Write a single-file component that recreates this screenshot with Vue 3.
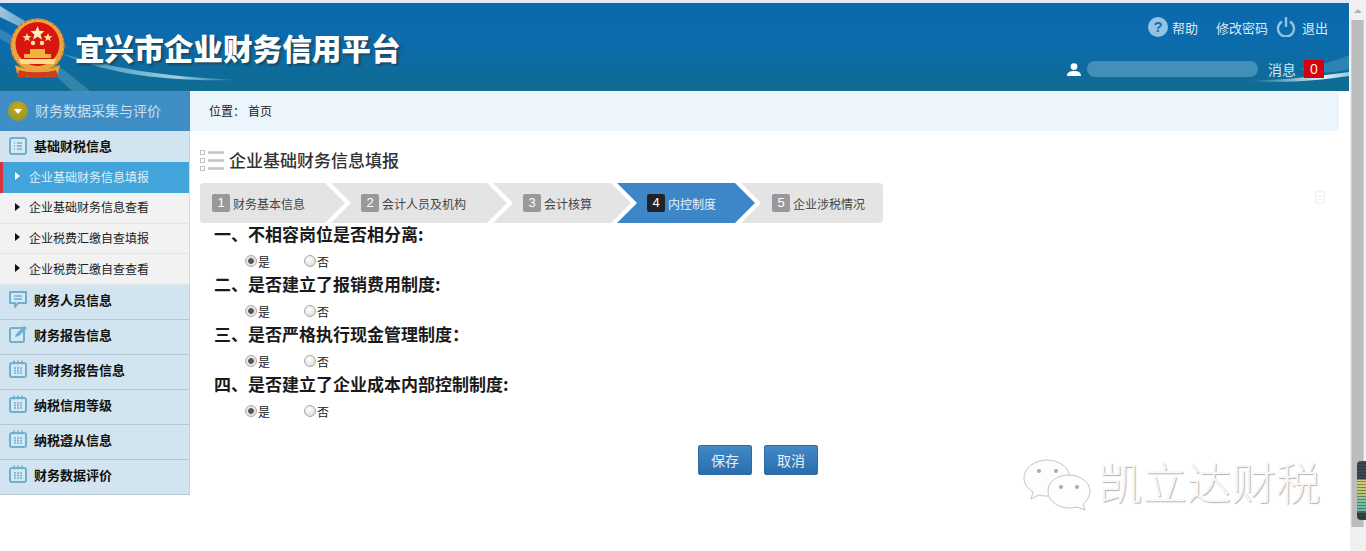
<template>
  <div class="page">
    <div class="viewport">
      <header class="top">
        <svg class="swoosh" viewBox="0 0 1349 88" preserveAspectRatio="none">
          <defs>
            <linearGradient id="sw1" x1="0" x2="1" y1="0" y2="0">
              <stop offset="0" stop-color="#fff" stop-opacity=".6" />
              <stop offset="1" stop-color="#fff" stop-opacity="0" />
            </linearGradient>
            <linearGradient id="sw2" x1="0" x2="1" y1="0" y2="0">
              <stop offset="0" stop-color="#9fe0f5" stop-opacity="0" />
              <stop offset=".75" stop-color="#e8fbff" stop-opacity=".95" />
              <stop offset="1" stop-color="#d5f2fa" stop-opacity=".7" />
            </linearGradient>
            <linearGradient id="sw3" x1="0" x2="1" y1="0" y2="0">
              <stop offset="0" stop-color="#7fd0ea" stop-opacity=".35" />
              <stop offset=".65" stop-color="#d0f1fa" stop-opacity=".75" />
              <stop offset="1" stop-color="#bdeaf6" stop-opacity="0" />
            </linearGradient>
          </defs>
          <path d="M0 3 C30 22 55 34 75 48 C45 36 20 24 0 14Z" fill="url(#sw1)" />
          <path d="M0 26 C25 40 60 62 90 88 L72 88 C50 66 25 48 0 36Z" fill="#8cc9e0" fill-opacity=".28" />
          <path d="M60 50 C110 64 160 74 240 77 C160 79 105 70 60 50Z" fill="url(#sw3)" />
          <path d="M1245 78 C1285 77 1320 73 1349 69 L1349 73 C1315 78 1285 80 1245 78Z" fill="url(#sw2)" />
          <path d="M1300 66 C1320 62 1335 58 1349 52 L1349 66 C1335 70 1320 71 1300 66Z" fill="#9fdcf0" fill-opacity=".22" />
        </svg>
        <svg class="emblem" viewBox="0 0 55 62">
          <circle cx="27.5" cy="27.5" r="27" fill="#e9a63e" />
          <circle cx="27.5" cy="27.5" r="26.5" fill="none" stroke="#cf6a22" stroke-width="1.2" stroke-dasharray="3 2" />
          <circle cx="27.5" cy="26" r="22" fill="#d9150f" />
          <polygon points="27.5,8 29.4,12.8 34.5,13.2 30.6,16.4 31.9,21.4 27.5,18.7 23.1,21.4 24.4,16.4 20.5,13.2 25.6,12.8" fill="#fff0c0" />
          <g fill="#fbe29a">
            <polygon points="17,15 18.2,18 21.4,18.2 18.9,20.2 19.7,23.3 17,21.6 14.3,23.3 15.1,20.2 12.6,18.2 15.8,18" />
            <polygon points="38,15 39.2,18 42.4,18.2 39.9,20.2 40.7,23.3 38,21.6 35.3,23.3 36.1,20.2 33.6,18.2 36.8,18" />
            <circle cx="23" cy="25" r="2.2" />
            <circle cx="32" cy="25" r="2.2" />
          </g>
          <path d="M20 31h15v5h6v4H14v-4h6z" fill="#eeb53c" />
          <path d="M9 41h37l-2 5H11z" fill="#fbe08a" />
          <path d="M5 47c5 2 9 4 13 4h19c4 0 8-2 13-4l-2 8c-5 6-36 6-41 0z" fill="#e9a63e" />
          <path d="M9 52c6 3 31 3 37 0l2 6c-3 3-7 2-10 0-4 3-17 3-21 0-3 2-7 3-10 0z" fill="#d23a1e" />
        </svg>
        <div class="brand">宜兴市企业财务信用平台</div>
        <div class="top-right">
          <div class="links">
            <a class="link">
              <svg class="ic-help" viewBox="0 0 20 20"><circle cx="10" cy="10" r="10" fill="#93c3e4" /><text x="10" y="15" text-anchor="middle" class="q">?</text></svg>
              帮助
            </a>
            <a class="link pw">修改密码</a>
            <a class="link">
              <svg class="ic-power" viewBox="0 0 20 20" fill="none" stroke="#93c3e4" stroke-width="2.4"><path d="M6 4.6a8 8 0 1 0 8 0" /><path d="M10 0v10" /></svg>
              退出
            </a>
          </div>
          <div class="user-row">
            <svg class="ic-user" viewBox="0 0 14 13"><circle cx="7" cy="3.6" r="3.4" fill="#fff" /><path d="M0 13c0-4 3-5 7-5s7 1 7 5z" fill="#fff" /></svg>
            <span class="blur"></span>
            <span class="msg">消息</span>
            <span class="badge">0</span>
          </div>
        </div>
      </header>

      <div class="body">
        <aside class="side">
          <div class="side-title">
            <span class="dot"></span>
            <span class="side-text">财务数据采集与评价</span>
          </div>
          <template v-for="g in groups" :key="g.name">
            <div class="group" :class="{ first: g.first }">
              <svg class="g-icon" viewBox="0 0 18 18">
                <template v-if="g.icon === 'list'">
                  <rect x="1" y="1" width="16" height="16" rx="2" fill="#d8e8f2" stroke="#6fb0d0" stroke-width="2" />
                  <path d="M5 6h1M8 6h5M5 9h1M8 9h5M5 12h1M8 12h5" stroke="#6fb0d0" stroke-width="1.4" />
                </template>
                <template v-else-if="g.icon === 'chat'">
                  <path d="M1 2h16v11H9l-3 4v-4H1z" fill="#d8e8f2" stroke="#6fb0d0" stroke-width="2" stroke-linejoin="round" />
                  <path d="M5 6h8M5 9h8" stroke="#6fb0d0" stroke-width="1.4" />
                </template>
                <template v-else-if="g.icon === 'edit'">
                  <rect x="1" y="3" width="14" height="14" rx="1.5" fill="#d8e8f2" stroke="#6fb0d0" stroke-width="2" />
                  <path d="M6 12l1-3 8-8 3 2-8 8z" fill="#6fb0d0" />
                </template>
                <template v-else>
                  <rect x="1" y="3" width="16" height="14" rx="2" fill="#d8e8f2" stroke="#6fb0d0" stroke-width="2" />
                  <path d="M5 0.5v4M9 0.5v4M13 0.5v4" stroke="#6fb0d0" stroke-width="1.5" />
                  <path d="M5 8h8M5 10.5h8M5 13h8" stroke="#6fb0d0" stroke-width="1.3" stroke-dasharray="2 1" />
                </template>
              </svg>
              <span class="g-text">{{ g.name }}</span>
            </div>
            <div
              v-for="s in g.items"
              :key="s.name"
              class="sub"
              :class="{ active: s.active }"
            >
              <i class="arrow"></i>{{ s.name }}
            </div>
          </template>
        </aside>

        <main class="main">
          <div class="crumb">位置：<span class="here">首页</span></div>

          <div class="panel">
            <h2 class="heading">
              <svg class="h-icon" viewBox="0 0 24 22" fill="none">
                <g stroke="#c3c3c3">
                  <rect x="0.5" y="0.5" width="4" height="4" />
                  <rect x="0.5" y="8.5" width="4" height="4" />
                  <rect x="0.5" y="16.5" width="4" height="4" />
                </g>
                <path d="M8 2.5h16M8 10.5h16M8 18.5h16" stroke="#c3c3c3" stroke-width="2.4" />
              </svg>
              <span class="h-text">企业基础财务信息填报</span>
            </h2>

            <div class="steps">
              <div
                v-for="(s, i) in steps"
                :key="s"
                class="step"
                :class="{ on: i === 3, head: i === 0, tail: i === 4 }"
                :style="{ width: stepWidths[i] + 'px' }"
              >
                <b class="num">{{ i + 1 }}</b>{{ s }}
              </div>
            </div>

            <div class="qs">
              <div v-for="(q, i) in questions" :key="q" class="q-block">
                <div class="q-title">{{ q }}</div>
                <div class="q-opts">
                  <label class="opt">
                    <input v-model="answers[i]" type="radio" :name="'q' + i" value="yes" />是
                  </label>
                  <label class="opt">
                    <input v-model="answers[i]" type="radio" :name="'q' + i" value="no" />否
                  </label>
                </div>
              </div>
            </div>

            <div class="actions">
              <button class="btn">保存</button>
              <button class="btn">取消</button>
            </div>
          </div>

          <svg class="ghost" viewBox="0 0 16 18" fill="none" stroke="#ececec">
            <path d="M1 3h14M3 3v13h10V3M6 1h4M5 8h6M5 12h6" />
          </svg>

          <div class="mark">
            <svg class="wechat" viewBox="0 0 70 56">
              <g fill="#fdfdfd" stroke="#c4c4c4" stroke-width="1">
                <path d="M24 2c12 0 23 8 23 18 0 10-10 18-23 18-3 0-5 0-8-1l-8 4 2-7C5 31 1 26 1 20 1 10 12 2 24 2z" />
                <path d="M46 17c11 0 21 7 21 16 0 5-3 10-7 13l2 6-8-3c-3 1-5 1-8 1-11 0-21-7-21-17s10-16 21-16z" />
              </g>
              <g fill="#ababab">
                <circle cx="16" cy="13" r="2" /><circle cx="33" cy="13" r="2" />
                <circle cx="38" cy="29" r="2" /><circle cx="54" cy="29" r="2" />
              </g>
            </svg>
            <span class="mark-text">凯立达财税</span>
          </div>
        </main>
      </div>
    </div>

    <div class="scrollbar">
      <div class="sb-up"></div>
      <div class="sb-thumb">
        <div class="gadget"></div>
      </div>
    </div>
  </div>
</template>

<script setup>
import { reactive } from 'vue'

const groups = [
  {
    name: '基础财税信息',
    icon: 'list',
    first: true,
    items: [
      { name: '企业基础财务信息填报', active: true },
      { name: '企业基础财务信息查看' },
      { name: '企业税费汇缴自查填报' },
      { name: '企业税费汇缴自查查看' }
    ]
  },
  { name: '财务人员信息', icon: 'chat', items: [] },
  { name: '财务报告信息', icon: 'edit', items: [] },
  { name: '非财务报告信息', icon: 'cal', items: [] },
  { name: '纳税信用等级', icon: 'cal', items: [] },
  { name: '纳税遵从信息', icon: 'cal', items: [] },
  { name: '财务数据评价', icon: 'cal', items: [] }
]

const steps = ['财务基本信息', '会计人员及机构', '会计核算', '内控制度', '企业涉税情况']
const stepWidths = [145, 176, 138, 138, 142]

const questions = [
  '一、不相容岗位是否相分离:',
  '二、是否建立了报销费用制度:',
  '三、是否严格执行现金管理制度：',
  '四、是否建立了企业成本内部控制制度:'
]
const answers = reactive(['yes', 'yes', 'yes', 'yes'])
</script>

<style>
html, body { margin: 0; height: 100%; overflow: hidden; background: #fff; }
</style>

<style scoped>
.page {
  display: flex;
  width: 1366px;
  height: 551px;
  overflow: hidden;
  font-family: "Noto Sans CJK SC", "Liberation Sans", sans-serif;
  color: #222;
}
.viewport { width: 1350px; display: flex; flex-direction: column; padding-top: 3px; background: linear-gradient(#dfe9f1 3px, #fff 3px); box-sizing: border-box; }

.top {
  position: relative;
  height: 88px;
  margin-right: 1px;
  flex: none;
  display: flex;
  align-items: center;
  background: linear-gradient(#0a69ad 0, #0b6bab 45%, #0f6c92 100%);
  overflow: hidden;
}
.swoosh { position: absolute; inset: 0; width: 100%; height: 100%; }
.emblem { position: relative; width: 55px; height: 62px; margin: 4px 0 0 10px; flex: none; }
.brand {
  position: relative;
  margin: 2px 0 0 10px;
  font-size: 29.6px;
  font-weight: 900;
  line-height: 1;
  color: #fff;
  text-shadow: 2px 2px 2px rgba(40, 50, 60, .65);
  white-space: nowrap;
}
.top-right {
  position: relative;
  margin-left: auto;
  padding-right: 21px;
  align-self: stretch;
  display: flex;
  flex-direction: column;
  align-items: flex-end;
}
.links { display: flex; align-items: center; height: 20px; margin-top: 14px; font-size: 13px; color: #dbe9f5; }
.link { display: flex; align-items: center; gap: 4px; white-space: nowrap; }
.pw { margin: 0 8px 0 18px; }
.ic-help { width: 20px; height: 20px; }
.q { font: bold 15px "Liberation Sans", sans-serif; fill: #1a6fae; }
.ic-power { width: 20px; height: 20px; margin-right: 2px; }
.user-row { display: flex; align-items: center; height: 18px; margin-top: 23px; padding-right: 4px; }
.ic-user { width: 14px; height: 13px; }
.blur { width: 171px; height: 16px; margin-left: 6px; border-radius: 8px; background: rgba(180, 220, 238, .32); }
.msg { margin-left: 10px; font-size: 14px; color: #d6e8f4; }
.badge { width: 20px; height: 18px; margin-left: 8px; background: #d4000f; color: #fff3c8; font: 14px/18px "Liberation Sans", sans-serif; text-align: center; }

.body { flex: 1; display: flex; min-height: 0; }

.side { width: 190px; flex: none; align-self: flex-start; box-sizing: border-box; }
.side-title {
  height: 40px;
  box-sizing: border-box;
  display: flex;
  align-items: center;
  gap: 7px;
  padding-left: 8px;
  background: #3f8ec6;
  color: #c8e0f0;
  font-size: 14px;
}
.side-text { margin-top: -2px; }
.dot {
  width: 20px;
  height: 20px;
  border-radius: 50%;
  background: radial-gradient(circle at 50% 35%, #c9a52a, #87941f);
  position: relative;
}
.dot::after {
  content: "";
  position: absolute;
  left: 6px;
  top: 8px;
  border: 4px solid transparent;
  border-top: 5px solid #fff;
  border-bottom: 0;
}
.group {
  height: 35px;
  box-sizing: border-box;
  display: flex;
  align-items: center;
  gap: 7px;
  padding: 0 0 6px 9px;
  background: #d2e4ef;
  border-right: 1px solid #c3d5e0;
  border-bottom: 1px solid #b4c8d4;
  font-size: 13px;
  font-weight: 700;
  color: #111;
}
.group.first { height: 31px; border-bottom: 0; padding-bottom: 2px; }
.g-icon { width: 18px; height: 18px; flex: none; }
.g-text { white-space: nowrap; }
.sub {
  height: 30.75px;
  box-sizing: border-box;
  display: flex;
  align-items: center;
  padding: 0 0 2px 15px;
  background: #f2f2f2;
  border-right: 1px solid #d5dde2;
  border-bottom: 1px solid #e4e4e4;
  font-size: 12px;
  color: #222;
}
.sub .arrow {
  width: 0;
  height: 0;
  margin-right: 9px;
  border: 4px solid transparent;
  border-left: 5px solid #111;
  border-right: 0;
}
.sub.active { background: #41a5dc; color: #dff1fb; border-left: 3px solid #d8333a; padding-left: 12px; border-bottom: 0; }
.sub.active .arrow { border-left-color: #fff; }

.main { flex: 1; position: relative; min-width: 0; padding-right: 11px; }
.crumb {
  height: 40px;
  line-height: 40px;
  padding-left: 19px;
  background: #edf5fc;
  font-size: 12px;
  color: #222;
}
.here { margin-left: 3px; }
.panel { padding-left: 10px; }
.heading {
  display: flex;
  align-items: center;
  gap: 5px;
  height: 22px;
  margin: 19px 0 0;
  font-size: 17px;
  font-weight: 500;
  color: #333;
}
.h-text { margin-top: -4px; }
.h-icon { width: 24px; height: 22px; flex: none; }
.steps { display: flex; margin-top: 11px; }
.step {
  height: 40px;
  flex: none;
  box-sizing: border-box;
  display: flex;
  align-items: center;
  padding-left: 30px;
  margin-right: -14px;
  background: #e4e4e4;
  color: #444;
  font-size: 12px;
  clip-path: polygon(0 0, calc(100% - 20px) 0, 100% 50%, calc(100% - 20px) 100%, 0 100%, 20px 50%);
}
.step.head {
  padding-left: 12px;
  border-radius: 4px 0 0 4px;
  clip-path: polygon(0 0, calc(100% - 20px) 0, 100% 50%, calc(100% - 20px) 100%, 0 100%);
}
.step.tail {
  margin-right: 0;
  padding-left: 31px;
  border-radius: 0 4px 4px 0;
  clip-path: polygon(0 0, 100% 0, 100% 100%, 0 100%, 20px 50%);
}
.step.on { background: #3d87c8; color: #e6f1fa; }
.num {
  width: 18px;
  height: 18px;
  margin-right: 3px;
  border-radius: 2px;
  background: #999;
  color: #fff;
  font: 13px/18px "Liberation Sans", sans-serif;
  text-align: center;
  flex: none;
}
.step.on .num { background: #222; }

.qs { padding-left: 14px; margin-top: 2px; }
.q-block { height: 50px; }
.q-title { height: 22px; line-height: 18px; font-size: 17px; font-weight: 700; color: #1a1a1a; white-space: nowrap; }
.q-opts { display: flex; height: 28px; align-items: center; padding-left: 31px; gap: 33px; }
.opt { display: flex; align-items: center; width: 26px; font-size: 12px; color: #222; }
.opt input {
  appearance: none;
  width: 12px;
  height: 12px;
  margin: 0 1px 0 0;
  border: 1px solid #a9a9a9;
  border-radius: 50%;
  background: radial-gradient(circle at 40% 35%, #fff, #d4d4d4);
  box-sizing: border-box;
}
.opt input:checked { background: radial-gradient(circle, #555 0 2.5px, #e6e6e6 3.2px); }

.actions { display: flex; gap: 12px; padding-left: 498px; margin-top: 20px; }
.btn {
  width: 54px;
  height: 30px;
  padding: 0;
  border: 1px solid #2c6ca4;
  border-radius: 2px;
  background: linear-gradient(#4289c6, #2b6dac);
  color: #e6f0f8;
  font-family: inherit;
  font-size: 14px;
}

.ghost { position: absolute; left: 1123px; top: 98px; width: 14px; height: 16px; }

.mark { position: absolute; left: 833px; top: 367px; display: flex; align-items: center; gap: 5px; }
.wechat { width: 70px; height: 56px; flex: none; }
.mark-text {
  margin-top: -10px;
  font-size: 44.5px;
  font-weight: 300;
  line-height: 56px;
  color: #f7f7f7;
  text-shadow: 1px 1px 1px #b4b4b4;
  white-space: nowrap;
}

.scrollbar { width: 16px; flex: none; background: #f0f0f0; padding-top: 20px; position: relative; box-sizing: border-box; height: 551px; }
.sb-up {
  position: absolute;
  left: 4px;
  top: 9px;
  border: 4px solid transparent;
  border-bottom: 4px solid #b0b0b0;
  border-top: 0;
}
.sb-thumb { position: relative; width: 13px; height: 507px; margin-left: 1px; background: #bcbcbc; box-shadow: inset 1px 0 #cfcfcf, inset -1px 0 #cfcfcf; }
.gadget {
  position: absolute;
  left: 6px;
  top: 441px;
  width: 9px;
  height: 59px;
  border-radius: 4px 0 0 4px;
  background:
    repeating-linear-gradient(rgba(255, 255, 255, 0) 0 2px, rgba(30, 40, 45, .45) 2px 3px),
    linear-gradient(#3b4a52 0 30%, #d5cf72 33%, #b8c96e 55%, #6cc3ab 72%, #66b9a8 85%, #334047 88%);
}
</style>
